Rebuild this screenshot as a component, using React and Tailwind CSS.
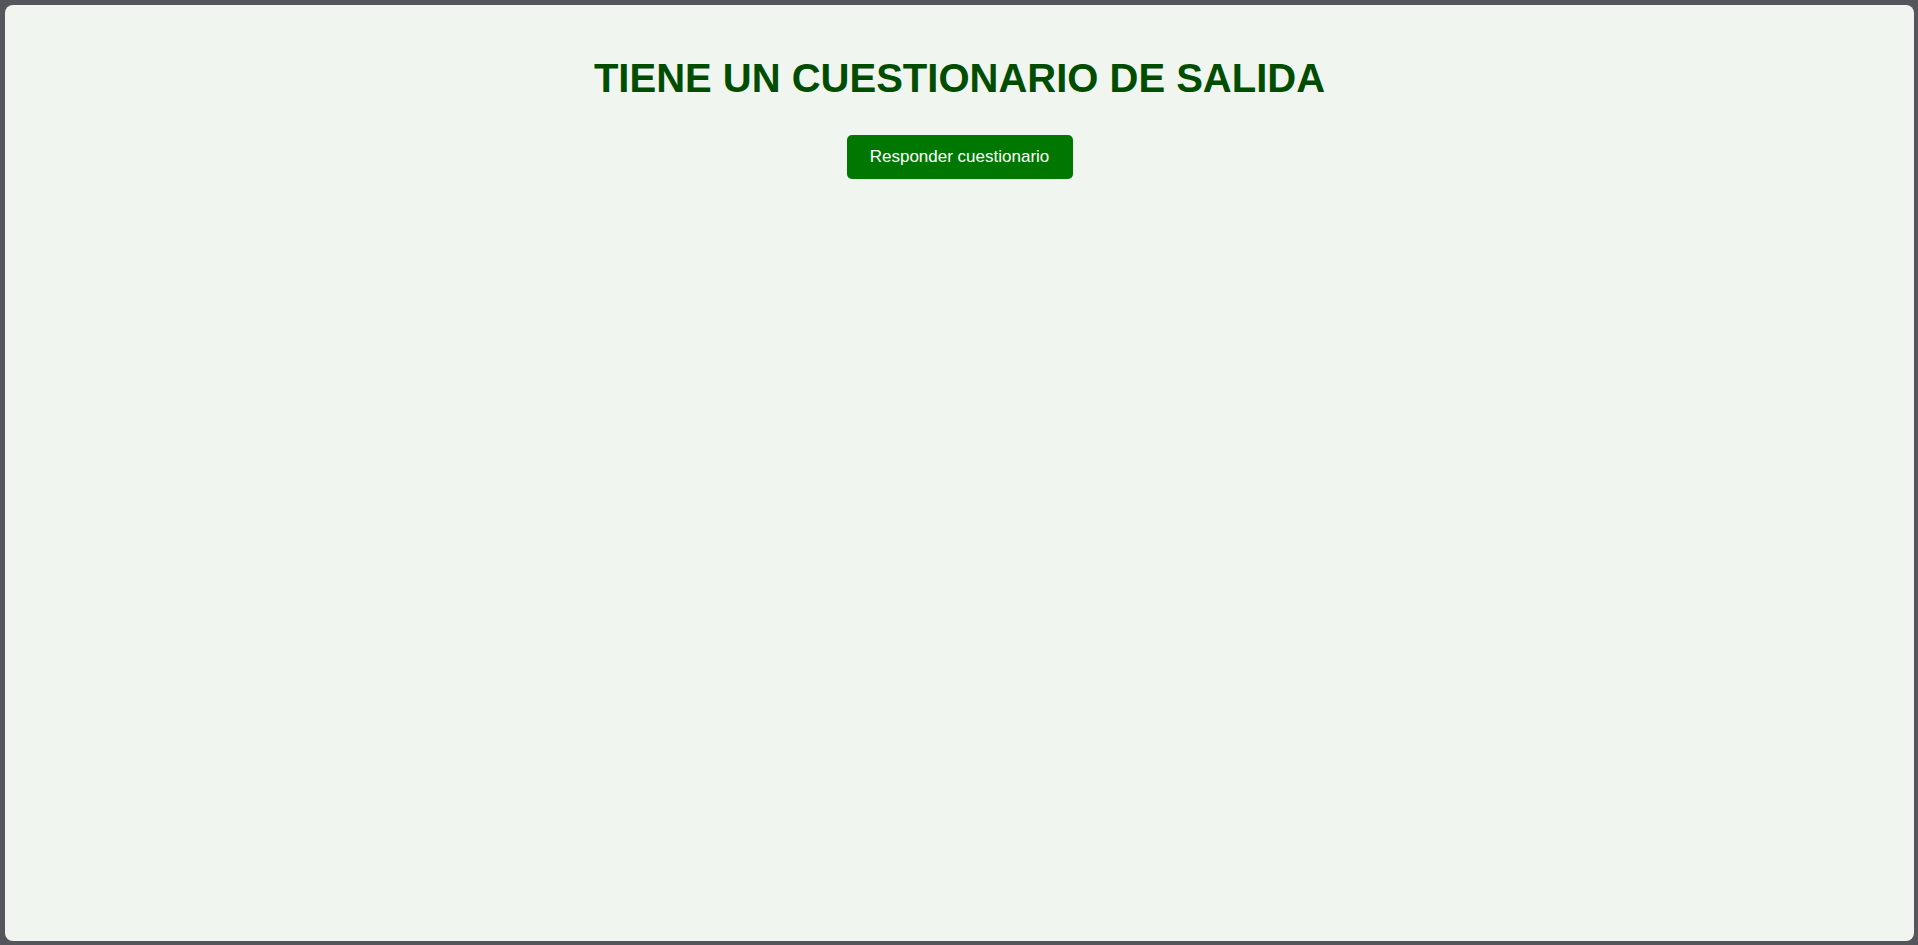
export default function App() {
  return (
    <div className="h-[945px] w-full bg-[#54565b] pt-[5px] pl-[5px] pr-[4px] pb-[4px]" style={{ fontFamily: '"Liberation Sans", Arial, sans-serif' }}>
      <div className="h-full rounded-lg bg-[#f0f5ef] flex flex-col items-center">
        <h1 className="mt-[49px] text-[40px] leading-[48px] font-bold text-[#004d00]">
          TIENE UN CUESTIONARIO DE SALIDA
        </h1>
        <button className="mt-[33px] h-[44px] w-[226px] rounded-[5px] bg-[#007700] text-white text-[17px]">
          Responder cuestionario
        </button>
      </div>
    </div>
  );
}
